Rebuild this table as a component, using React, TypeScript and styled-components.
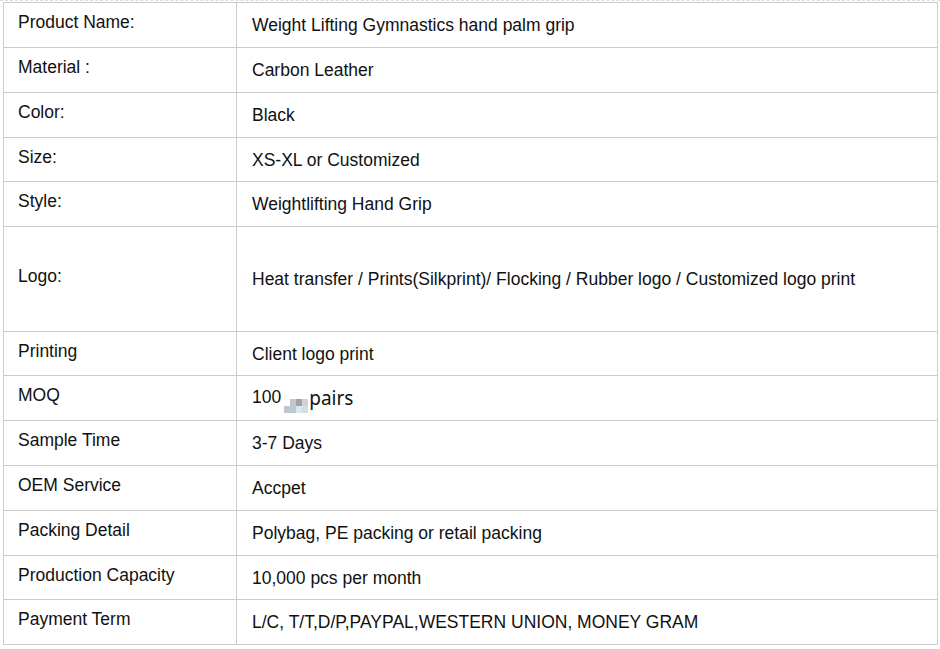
import React from 'react'
import styled, { createGlobalStyle } from 'styled-components'

const GlobalStyle = createGlobalStyle`
  html, body {
    margin: 0;
    padding: 0;
    background: #ffffff;
  }
  body {
    font-family: "Liberation Sans", Arial, sans-serif;
  }
`

type Row = { label: string; value: React.ReactNode; h: number }

const rows: Row[] = [
  { label: 'Product Name:', value: 'Weight Lifting Gymnastics hand palm grip', h: 45 },
  { label: 'Material :', value: 'Carbon Leather', h: 45 },
  { label: 'Color:', value: 'Black', h: 45 },
  { label: 'Size:', value: 'XS-XL or Customized', h: 44 },
  { label: 'Style:', value: 'Weightlifting Hand Grip', h: 45 },
  { label: 'Logo:', value: 'Heat transfer / Prints(Silkprint)/ Flocking / Rubber logo / Customized logo print', h: 105 },
  { label: 'Printing', value: 'Client logo print', h: 44 },
  { label: 'MOQ', value: 'moq', h: 45 },
  { label: 'Sample Time', value: '3-7 Days', h: 45 },
  { label: 'OEM Service', value: 'Accpet', h: 45 },
  { label: 'Packing Detail', value: 'Polybag, PE packing or retail packing', h: 45 },
  { label: 'Production Capacity', value: '10,000 pcs per month', h: 44 },
  { label: 'Payment Term', value: 'L/C, T/T,D/P,PAYPAL,WESTERN UNION, MONEY GRAM', h: 45 },
]

// blurred-out spot in the MOQ value
const Mosaic = () => (
  <Blur>
    <Tile $c="#ffffff" />
    <Tile $c="#c4c6c8" />
    <Tile $c="#9ea2a6" />
    <Tile $c="#d0d2d4" />
    <Tile $c="#c2c6ca" />
    <Tile $c="#b8cad6" />
    <Tile $c="#dde8ee" />
    <Tile $c="#d4dde3" />
  </Blur>
)

const App = () => {
  return (
    <Page>
      <GlobalStyle />
      <Table>
        <colgroup>
          <col style={{ width: 233 }} />
          <col />
        </colgroup>
        <tbody>
          {rows.map((r) => (
            <Tr key={r.label} $h={r.h}>
              <Label>{r.label}</Label>
              <Value>
                {r.value === 'moq' ? (
                  <>
                    100
                    <Mosaic />
                    <Pairs>pairs</Pairs>
                  </>
                ) : (
                  r.value
                )}
              </Value>
            </Tr>
          ))}
        </tbody>
      </Table>
    </Page>
  )
}

export default App

const Page = styled.div`
  width: 940px;
  height: 649px;
  box-sizing: border-box;
  padding: 1px 2px 0 3px;
  overflow: hidden;
  border-top: 1px dashed #dcdcdc;
`

const Table = styled.table`
  width: 935px;
  border-collapse: collapse;
  table-layout: fixed;
  color: #111111;
  font-size: 17.5px;
`

const Tr = styled.tr<{ $h: number }>`
  height: ${(p) => p.$h}px;
`

const Label = styled.td`
  border: 1px solid #cccccc;
  padding: 0 0 5px 14px;
  vertical-align: middle;
  white-space: nowrap;
`

const Value = styled.td`
  border: 1px solid #cccccc;
  padding: 1px 0 0 15px;
  vertical-align: middle;
  white-space: nowrap;
`

const Blur = styled.span`
  display: inline-grid;
  grid-template-columns: repeat(4, 6px);
  grid-template-rows: repeat(2, 7px);
  vertical-align: -3px;
  margin-left: 3px;
  filter: blur(0.5px);
`

const Tile = styled.span<{ $c: string }>`
  background: ${(p) => p.$c};
`

const Pairs = styled.span`
  font-family: "Noto Sans", "Noto Sans CJK SC", sans-serif;
  font-size: 19px;
  margin-left: 1px;
  vertical-align: -2px;
`
